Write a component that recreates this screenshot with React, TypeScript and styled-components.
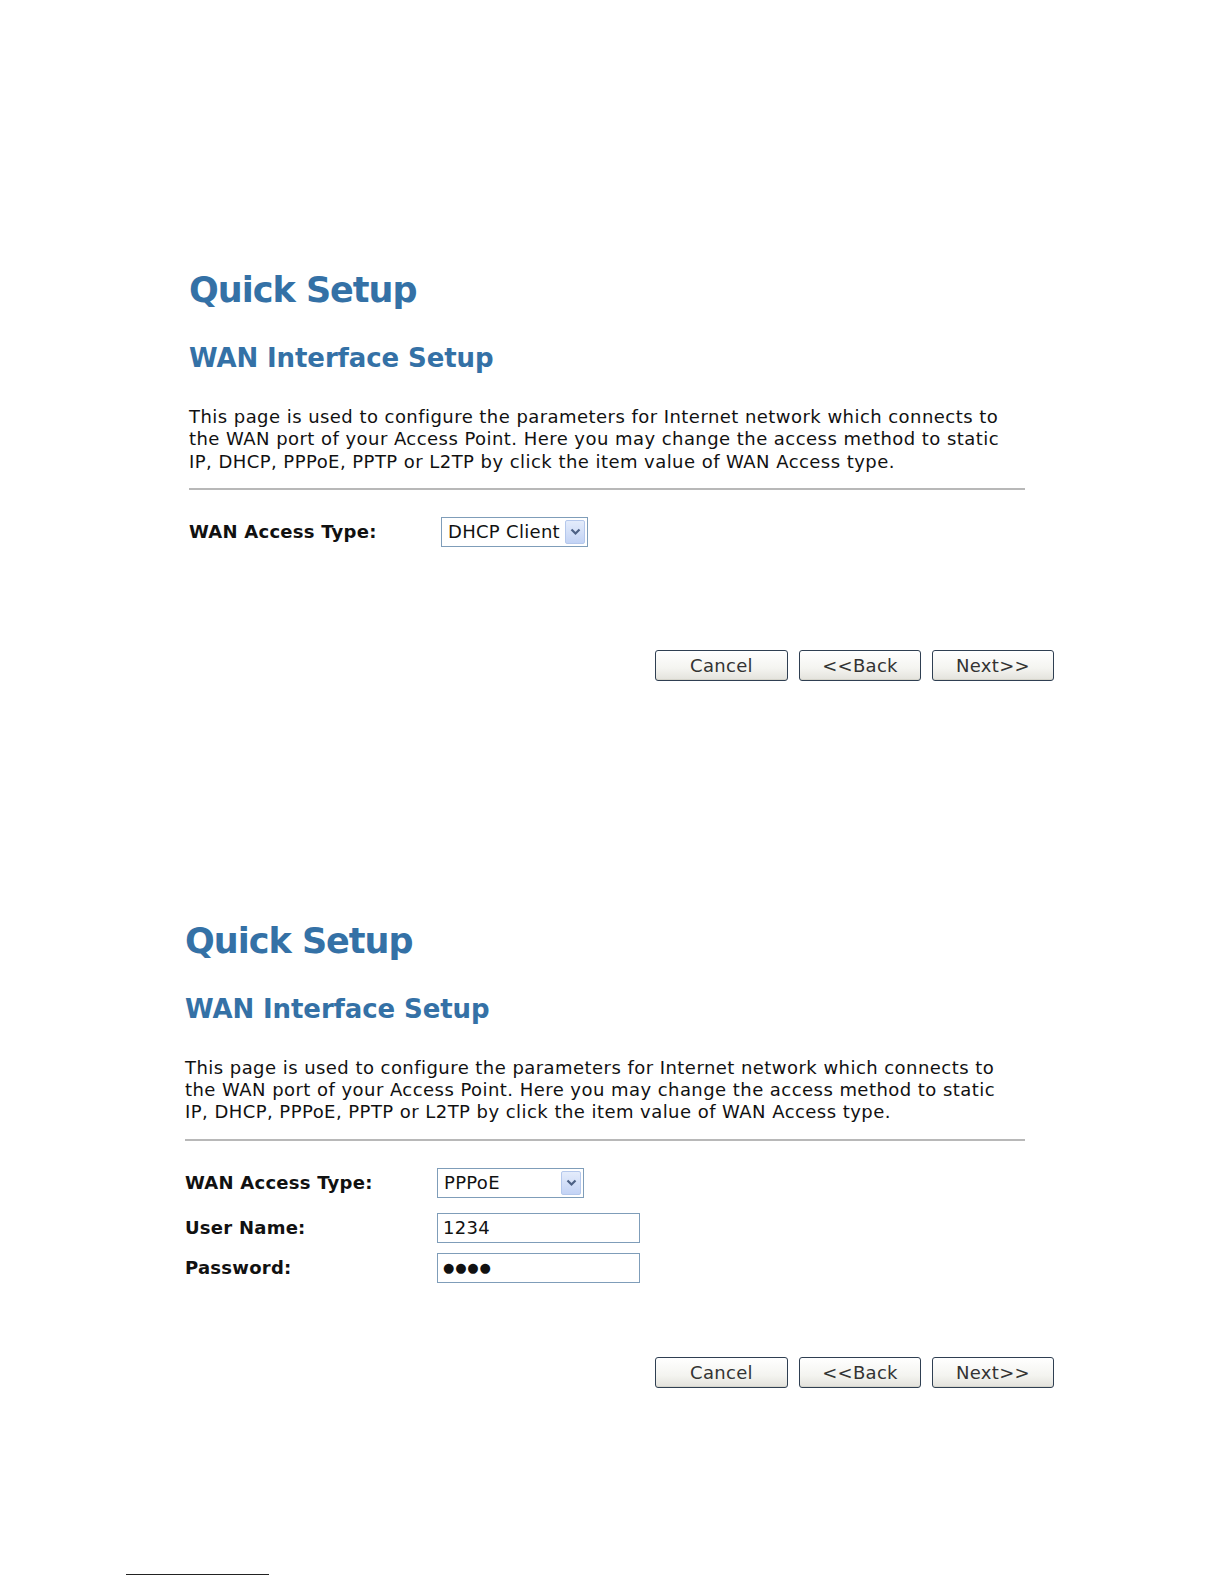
import React from 'react';
import styled, { createGlobalStyle } from 'styled-components';

const GlobalStyle = createGlobalStyle`
  html, body {
    margin: 0;
    padding: 0;
    background: #ffffff;
  }
  body {
    font-family: Verdana, "DejaVu Sans", sans-serif;
    color: #111111;
  }
`;

const Page = styled.div`
  width: 1224px;
  min-height: 1584px;
  padding-top: 268px;
  box-sizing: border-box;
  overflow: hidden;
`;

// panels share the same right edge, only the left edge moves a bit
const Panel = styled.section<{ $left: number; $top?: number }>`
  width: ${({ $left }) => 1054 - $left}px;
  margin-left: ${({ $left }) => $left}px;
  margin-top: ${({ $top }) => $top ?? 0}px;
`;

const Title = styled.h1`
  margin: 0;
  font-size: 35px;
  line-height: 44px;
  letter-spacing: -1px;
  font-weight: bold;
  color: #3471a6;
`;

const SubTitle = styled.h2`
  margin: 30px 0 0;
  font-size: 26px;
  line-height: 33px;
  letter-spacing: -0.1px;
  font-weight: bold;
  color: #3471a6;
`;

const Description = styled.p`
  margin: 31px 0 0;
  font-size: 18px;
  line-height: 22.3px;
  letter-spacing: 0.45px;
  white-space: nowrap;
`;

const Divider = styled.hr`
  margin: 15px 0 0;
  width: calc(100% - 29px);
  height: 0;
  border: none;
  border-top: 2px solid #b8b8b8;
`;

const Form = styled.div<{ $height: number }>`
  margin-top: 27px;
  min-height: ${({ $height }) => $height}px;
  display: flex;
  flex-direction: column;
`;

const FieldRow = styled.div<{ $after?: number }>`
  display: grid;
  grid-template-columns: 252px auto;
  align-items: center;
  height: 30px;
  margin-bottom: ${({ $after }) => $after ?? 0}px;
`;

const Label = styled.span`
  font-size: 18px;
  font-weight: bold;
  letter-spacing: 0.25px;
`;

const SelectBox = styled.div`
  width: 147px;
  height: 30px;
  box-sizing: border-box;
  border: 1px solid #7f9db9;
  background: #ffffff;
  display: flex;
  align-items: center;
  justify-content: space-between;
  padding: 2px 2px 2px 6px;
  font-size: 18px;
  letter-spacing: 0.3px;
`;

const ArrowButton = styled.span`
  width: 20px;
  height: 24px;
  box-sizing: border-box;
  border: 1px solid #b5c8ec;
  border-radius: 2px;
  background: linear-gradient(to bottom, #e4ecfb 0%, #c3d3f5 100%);
  display: flex;
  align-items: center;
  justify-content: center;
`;

const TextInput = styled.input<{ $masked?: boolean }>`
  width: 203px;
  height: 30px;
  box-sizing: border-box;
  border: 1px solid #7f9db9;
  padding: 0 5px;
  font-family: Verdana, "DejaVu Sans", sans-serif;
  font-size: ${({ $masked }) => ($masked ? '13px' : '18px')};
  letter-spacing: ${({ $masked }) => ($masked ? '0.8px' : '0.3px')};
  color: #111111;
  outline: none;
`;

const ButtonBar = styled.div`
  display: flex;
  justify-content: flex-end;
  gap: 11px;
`;

const Button = styled.button<{ $width: number }>`
  width: ${({ $width }) => $width}px;
  height: 31px;
  border: 1px solid #2f3f52;
  border-radius: 3px;
  background: linear-gradient(to bottom, #ffffff 0%, #f4f4f0 60%, #e3e2dc 100%);
  font-family: Verdana, "DejaVu Sans", sans-serif;
  font-size: 18px;
  letter-spacing: 0.3px;
  color: #333333;
  padding: 0;
  box-shadow: inset 0 -1px 0 #d6d5cc;
`;

const FootRule = styled.div`
  margin: 186px 0 0 126px;
  width: 143px;
  border-top: 1px solid #222222;
`;

const Chevron = () => (
  <svg width="11" height="8" viewBox="0 0 11 8">
    <path d="M1.5 1.5 L5.5 5.5 L9.5 1.5" fill="none" stroke="#4d6185" strokeWidth="2.2" />
  </svg>
);

const Select = ({ value }: { value: string }) => (
  <SelectBox>
    <span>{value}</span>
    <ArrowButton>
      <Chevron />
    </ArrowButton>
  </SelectBox>
);

const Buttons = () => (
  <ButtonBar>
    <Button $width={133}>Cancel</Button>
    <Button $width={122}>&lt;&lt;Back</Button>
    <Button $width={122}>Next&gt;&gt;</Button>
  </ButtonBar>
);

const SetupHeader = () => (
  <>
    <Title>Quick Setup</Title>
    <SubTitle>WAN Interface Setup</SubTitle>
    <Description>
      This page is used to configure the parameters for Internet network which connects to
      <br />
      the WAN port of your Access Point. Here you may change the access method to static
      <br />
      IP, DHCP, PPPoE, PPTP or L2TP by click the item value of WAN Access type.
    </Description>
    <Divider />
  </>
);

const App = () => {
  return (
    <Page>
      <GlobalStyle />
      <Panel $left={189}>
        <SetupHeader />
        <Form $height={133}>
          <FieldRow>
            <Label>WAN Access Type:</Label>
            <Select value="DHCP Client" />
          </FieldRow>
        </Form>
        <Buttons />
      </Panel>

      <Panel $left={185} $top={238}>
        <SetupHeader />
        <Form $height={189}>
          <FieldRow $after={15}>
            <Label>WAN Access Type:</Label>
            <Select value="PPPoE" />
          </FieldRow>
          <FieldRow $after={10}>
            <Label>User Name:</Label>
            <TextInput type="text" defaultValue="1234" readOnly />
          </FieldRow>
          <FieldRow>
            <Label>Password:</Label>
            <TextInput type="text" $masked defaultValue="●●●●" readOnly aria-label="Password" />
          </FieldRow>
        </Form>
        <Buttons />
      </Panel>

      <FootRule />
    </Page>
  );
};

export default App;
